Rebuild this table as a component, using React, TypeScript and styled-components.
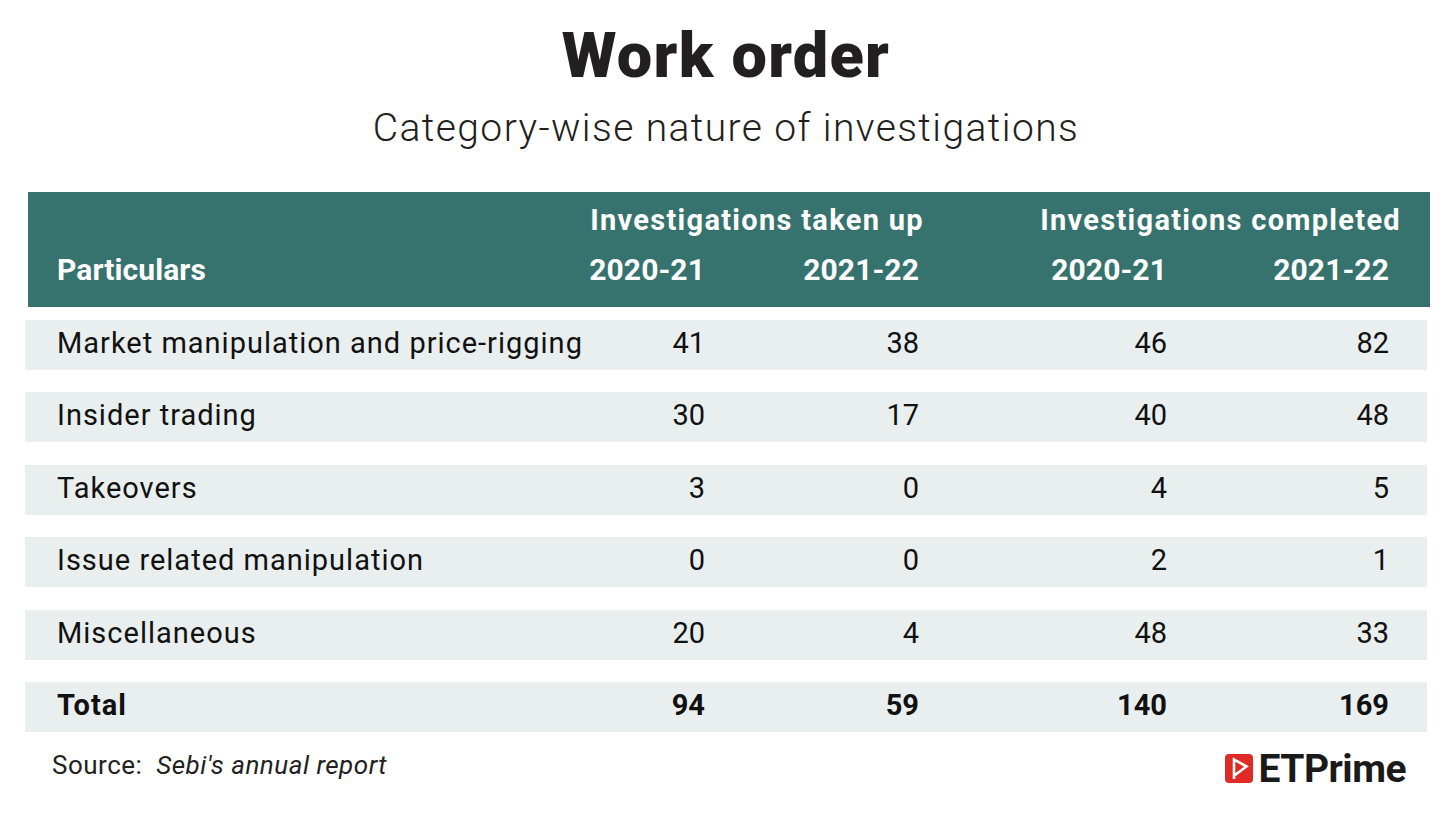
import React from 'react';
import styled, { createGlobalStyle } from 'styled-components';

const Global = createGlobalStyle`
  html, body { margin: 0; padding: 0; background: #ffffff; }
  body { font-family: Roboto, "Liberation Sans", Arial, sans-serif; }
`;

const COLS = '538px 110px 214px 248px 222px';

const Page = styled.div`
  width: 1452px;
  height: 832px;
  box-sizing: border-box;
  padding-top: 19px;
  display: flex;
  flex-direction: column;
`;

const Title = styled.h1`
  margin: 0;
  text-align: center;
  font-size: 63px;
  line-height: 73px;
  font-weight: 900;
  color: #231f20;
  letter-spacing: 1.3px;
`;

const Subtitle = styled.h2`
  margin: 13px 0 0;
  text-align: center;
  font-size: 39px;
  line-height: 46px;
  font-weight: 300;
  color: #231f20;
  letter-spacing: 1.4px;
`;

const Table = styled.div`
  margin: 41px 22px 0 25px;
  display: flex;
  flex-direction: column;
`;

const Header = styled.div`
  margin-left: 3px;
  background: #36736e;
  color: #ffffff;
  display: grid;
  grid-template-columns: ${COLS};
  grid-template-rows: 36px 40px;
  row-gap: 12px;
  padding: 10px 41px 17px 29px;
  font-weight: 700;
`;

const GroupLabel = styled.div<{ $col: string; $align: 'center' | 'end'; $shift?: number }>`
  grid-row: 1;
  grid-column: ${(p) => p.$col};
  justify-self: ${(p) => p.$align};
  margin-right: ${(p) => (p.$shift ? `${-p.$shift}px` : '0')};
  font-size: 29px;
  line-height: 36px;
  letter-spacing: 1.3px;
  white-space: nowrap;
`;

const HeadCell = styled.div<{ $right?: boolean }>`
  grid-row: 2;
  justify-self: ${(p) => (p.$right ? 'end' : 'start')};
  font-size: 30px;
  line-height: 40px;
  letter-spacing: 0.1px;
  white-space: nowrap;
`;

const Body = styled.div`
  margin-top: 13px;
  margin-right: 3px;
  display: flex;
  flex-direction: column;
  gap: 22.4px;
`;

const Row = styled.div<{ $total?: boolean }>`
  display: grid;
  grid-template-columns: ${COLS};
  height: 50px;
  box-sizing: border-box;
  padding: 0 38px 4px 32px;
  background: #e9eeef;
  color: #111111;
  font-size: 29px;
  line-height: 46px;
  font-weight: ${(p) => (p.$total ? 700 : 400)};
`;

const Label = styled.div`
  white-space: nowrap;
  letter-spacing: 1px;
`;

const Num = styled.div`
  justify-self: end;
  white-space: nowrap;
`;

const Footer = styled.div`
  margin-top: 15px;
  padding: 0 46px 0 52px;
  display: flex;
  justify-content: space-between;
  align-items: flex-start;
`;

const Source = styled.div`
  font-size: 26px;
  line-height: 36px;
  color: #222222;
  letter-spacing: 0.5px;
  white-space: pre;
`;

const SourceName = styled.span`
  font-style: italic;
`;

const Logo = styled.div`
  margin-top: 6px;
  display: flex;
  align-items: center;
  gap: 5px;
`;

const LogoText = styled.span`
  font-size: 39px;
  line-height: 32px;
  font-weight: 700;
  color: #1a1a1a;
  letter-spacing: -0.5px;
`;

type RowData = { label: string; v: [string, string, string, string]; total?: boolean };

const rows: RowData[] = [
  { label: 'Market manipulation and price-rigging', v: ['41', '38', '46', '82'] },
  { label: 'Insider trading', v: ['30', '17', '40', '48'] },
  { label: 'Takeovers', v: ['3', '0', '4', '5'] },
  { label: 'Issue related manipulation', v: ['0', '0', '2', '1'] },
  { label: 'Miscellaneous', v: ['20', '4', '48', '33'] },
  { label: 'Total', v: ['94', '59', '140', '169'], total: true },
];

const PrimeIcon = () => (
  <svg width="28" height="29" viewBox="0 0 28 29">
    <rect x="0" y="0" width="28" height="29" rx="4" fill="#e02a26" />
    <path d="M9 25 V5.5 L21.5 12.5 L10 21" fill="none" stroke="#ffffff" strokeWidth="2.6" strokeLinejoin="miter" />
  </svg>
);

export default function App() {
  return (
    <>
      <Global />
      <Page>
        <Title>Work order</Title>
        <Subtitle>Category-wise nature of investigations</Subtitle>
        <Table>
          <Header>
            <GroupLabel $col="2 / 4" $align="center">Investigations taken up</GroupLabel>
            <GroupLabel $col="4 / 6" $align="end" $shift={12}>Investigations completed</GroupLabel>
            <HeadCell>Particulars</HeadCell>
            <HeadCell $right>2020-21</HeadCell>
            <HeadCell $right>2021-22</HeadCell>
            <HeadCell $right>2020-21</HeadCell>
            <HeadCell $right>2021-22</HeadCell>
          </Header>
          <Body>
            {rows.map((r) => (
              <Row key={r.label} $total={r.total}>
                <Label>{r.label}</Label>
                {r.v.map((n, i) => (
                  <Num key={i}>{n}</Num>
                ))}
              </Row>
            ))}
          </Body>
        </Table>
        <Footer>
          <Source>
            {'Source:  '}
            <SourceName>Sebi's annual report</SourceName>
          </Source>
          <Logo>
            <PrimeIcon />
            <LogoText>ETPrime</LogoText>
          </Logo>
        </Footer>
      </Page>
    </>
  );
}
